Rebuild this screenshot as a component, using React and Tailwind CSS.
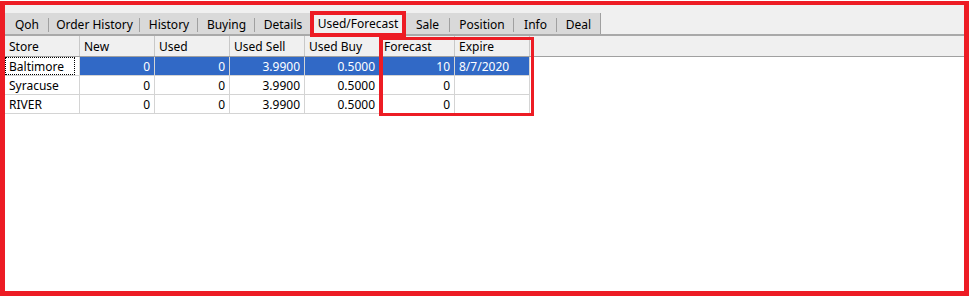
import React from "react";

const tabs = [
  { label: "Qoh", w: 44 },
  { label: "Order History", w: 91 },
  { label: "History", w: 58 },
  { label: "Buying", w: 57 },
  { label: "Details", w: 56, noSep: true },
  { label: "Used/Forecast", w: 94, selected: true },
  { label: "Sale", w: 45 },
  { label: "Position", w: 64 },
  { label: "Info", w: 43 },
  { label: "Deal", w: 44, last: true },
];

const cols = ["Store", "New", "Used", "Used Sell", "Used Buy", "Forecast", "Expire"];

const rows = [
  ["Baltimore", "0", "0", "3.9900", "0.5000", "10", "8/7/2020"],
  ["Syracuse", "0", "0", "3.9900", "0.5000", "0", ""],
  ["RIVER", "0", "0", "3.9900", "0.5000", "0", ""],
];

export default function App() {
  return (
    <div
      className="w-[969px] h-[296px] bg-white pt-[1px] overflow-hidden text-[12px] text-black"
      style={{ fontFamily: '"Noto Sans", "Open Sans", sans-serif' }}
    >
      <div className="relative h-[295px] border-x-[5px] border-t-[4px] border-b-[5px] border-[#ed1c24] bg-white flex flex-col">
        {/* tab strip */}
        <div className="h-[31px] bg-[#f0f0f0] flex items-end border-b-2 border-[#a9a9a9]">
          <div className="flex h-[21px] items-stretch">
            {tabs.map((t) =>
              t.selected ? (
                <div
                  key={t.label}
                  className="bg-[#f0f0f0] flex items-center justify-center -mt-[3px] h-[24px] pt-[4px] leading-none"
                  style={{ width: t.w }}
                >
                  {t.label}
                </div>
              ) : (
                <div
                  key={t.label}
                  className={`relative bg-[#d9d9d9] flex items-center justify-center pt-[2px] leading-none ${t.last ? "border-r border-[#a0a0a0]" : ""}`}
                  style={{ width: t.w }}
                >
                  {t.label}
                  {!t.noSep && !t.last && (
                    <span className="absolute right-0 top-[5px] h-[14px] w-px bg-[#a0a0a0]" />
                  )}
                </div>
              )
            )}
          </div>
        </div>
        {/* header row */}
        <div className="h-[21px] bg-[#f0f0f0] border-b border-[#a0a0a0] flex">
          {cols.map((c) => (
            <div
              key={c}
              className="w-[75px] border-r border-[#c8c8c8] pl-[4px] pt-[2px] flex items-center leading-none"
            >
              {c}
            </div>
          ))}
        </div>
        {/* body */}
        <div className="flex-1 bg-white">
          {rows.map((r, ri) => (
            <div key={ri} className="flex h-[19px]">
              {r.map((v, ci) => {
                const sel = ri === 0;
                const focus = sel && ci === 0;
                const left = ci === 0 || ci === 6;
                return (
                  <div
                    key={ci}
                    className={`w-[75px] border-r border-b border-[#d4d4d4] flex items-center leading-none ${
                      left ? "justify-start pl-[4px]" : "justify-end pr-[4px]"
                    } ${focus ? "" : "pt-[2px]"} ${sel && !focus ? "bg-[#3169c6] text-white" : "bg-white"}`}
                  >
                    {focus ? (
                      <div className="w-full h-full -ml-[4px] border border-dotted border-black flex items-center pl-[3px] pt-[2px]">
                        {v}
                      </div>
                    ) : (
                      v
                    )}
                  </div>
                );
              })}
            </div>
          ))}
        </div>
        {/* annotations */}
        <div className="absolute left-[305px] top-[6px] w-[96px] h-[26px] border-4 border-[#ed1c24]" />
        <div className="absolute left-[374px] top-[32px] w-[155px] h-[79px] border-[3px] border-l-4 border-[#ed1c24]" />
      </div>
    </div>
  );
}
